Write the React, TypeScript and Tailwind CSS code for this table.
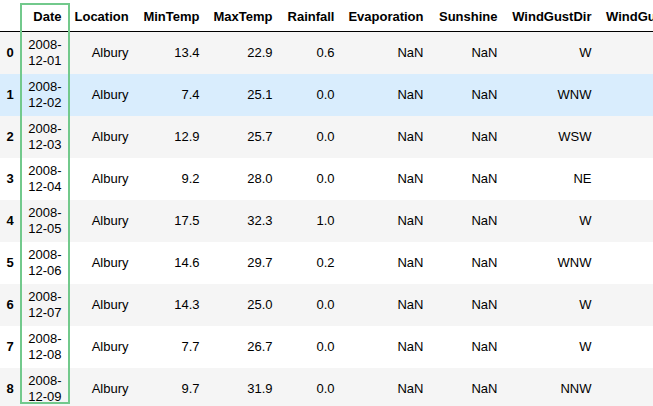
const rows = [
  { date: '2008-12-01', min: '13.4', max: '22.9', rain: '0.6', dir: 'W' },
  { date: '2008-12-02', min: '7.4', max: '25.1', rain: '0.0', dir: 'WNW' },
  { date: '2008-12-03', min: '12.9', max: '25.7', rain: '0.0', dir: 'WSW' },
  { date: '2008-12-04', min: '9.2', max: '28.0', rain: '0.0', dir: 'NE' },
  { date: '2008-12-05', min: '17.5', max: '32.3', rain: '1.0', dir: 'W' },
  { date: '2008-12-06', min: '14.6', max: '29.7', rain: '0.2', dir: 'WNW' },
  { date: '2008-12-07', min: '14.3', max: '25.0', rain: '0.0', dir: 'W' },
  { date: '2008-12-08', min: '7.7', max: '26.7', rain: '0.0', dir: 'W' },
  { date: '2008-12-09', min: '9.7', max: '31.9', rain: '0.0', dir: 'NNW' },
]

const speeds = ['44.0', '44.0', '46.0', '24.0', '41.0', '56.0', '50.0', '35.0', '80.0']

const columns = [
  { label: 'Date', width: 'w-[49px]' },
  { label: 'Location', width: 'w-[67px]' },
  { label: 'MinTemp', width: 'w-[71px]' },
  { label: 'MaxTemp', width: 'w-[73px]' },
  { label: 'Rainfall', width: 'w-[62px]' },
  { label: 'Evaporation', width: 'w-[89px]' },
  { label: 'Sunshine', width: 'w-[74px]' },
  { label: 'WindGustDir', width: 'w-[94px]' },
]

export default function App() {
  return (
    <div
      className="relative w-[653px] h-[406px] overflow-hidden bg-white text-black text-[13px]"
      style={{ fontFamily: '"Liberation Sans", Arial, sans-serif' }}
    >
      <table className="w-[718px] table-fixed border-collapse">
        <thead>
          <tr className="h-[31px] border-b border-black">
            <th className="w-[19px]" />
            {columns.map((col) => (
              <th
                key={col.label}
                className={`${col.width} px-[6.5px] pb-[6px] text-right align-bottom font-bold leading-4 whitespace-nowrap`}
              >
                {col.label}
              </th>
            ))}
            <th className="w-[120px] pl-[8px] pb-[6px] text-left align-bottom font-bold leading-4 whitespace-nowrap">
              WindGustSpeed
            </th>
          </tr>
        </thead>
        <tbody>
          {rows.map((r, i) => (
            <tr
              key={r.date}
              className={
                i === 1 ? 'h-[42px] bg-[#d9edfd]' : i % 2 === 0 ? 'h-[42px] bg-[#f5f5f5]' : 'h-[42px] bg-white'
              }
            >
              <th className="px-[6.5px] text-right align-middle font-bold leading-4">{i}</th>
              <td className="px-[6.5px] py-[5px] text-right align-middle leading-4">
                {r.date.slice(0, 5)}
                <br />
                {r.date.slice(5)}
              </td>
              <td className="px-[6.5px] text-right align-middle leading-4">Albury</td>
              <td className="px-[6.5px] text-right align-middle leading-4">{r.min}</td>
              <td className="px-[6.5px] text-right align-middle leading-4">{r.max}</td>
              <td className="px-[6.5px] text-right align-middle leading-4">{r.rain}</td>
              <td className="px-[6.5px] text-right align-middle leading-4">NaN</td>
              <td className="px-[6.5px] text-right align-middle leading-4">NaN</td>
              <td className="px-[6.5px] text-right align-middle leading-4">{r.dir}</td>
              <td className="px-[6.5px] text-right align-middle leading-4">{speeds[i]}</td>
            </tr>
          ))}
        </tbody>
      </table>

      {/* highlight box around the Date column */}
      <div className="pointer-events-none absolute left-[20px] top-[3px] w-[50px] h-[401px] border-2 border-[#72c98c]" />
    </div>
  )
}
